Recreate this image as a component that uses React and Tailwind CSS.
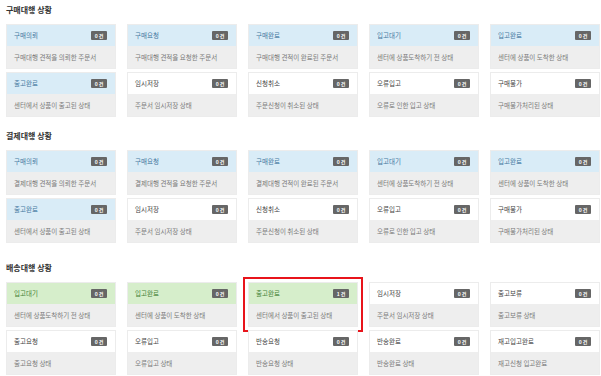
const sections = [
  {
    title: '구매대행 상황',
    cls: 'pt-[5px]',
    items: [
      ['구매의뢰', '구매대행 견적을 의뢰한 주문서', 'blue'],
      ['구매요청', '구매대행 견적을 요청한 주문서', 'blue'],
      ['구매완료', '구매대행 견적이 완료된 주문서', 'blue'],
      ['입고대기', '센터에 상품도착하기 전 상태', 'blue'],
      ['입고완료', '센터에 상품이 도착한 상태', 'blue'],
      ['출고완료', '센터에서 상품이 출고된 상태', 'blue'],
      ['임시저장', '주문서 임시저장 상태', 'white'],
      ['신청취소', '주문신청이 취소된 상태', 'white'],
      ['오류입고', '오류로 인한 입고 상태', 'white'],
      ['구매불가', '구매불가처리된 상태', 'white'],
    ],
  },
  {
    title: '결제대행 상황',
    cls: 'pt-[14px]',
    items: [
      ['구매의뢰', '결제대행 견적을 의뢰한 주문서', 'blue'],
      ['구매요청', '결제대행 견적을 요청한 주문서', 'blue'],
      ['구매완료', '결제대행 견적이 완료된 주문서', 'blue'],
      ['입고대기', '센터에 상품도착하기 전 상태', 'blue'],
      ['입고완료', '센터에 상품이 도착한 상태', 'blue'],
      ['출고완료', '센터에서 상품이 출고된 상태', 'blue'],
      ['임시저장', '주문서 임시저장 상태', 'white'],
      ['신청취소', '주문신청이 취소된 상태', 'white'],
      ['오류입고', '오류로 인한 입고 상태', 'white'],
      ['구매불가', '구매불가처리된 상태', 'white'],
    ],
  },
  {
    title: '배송대행 상황',
    cls: 'pt-[20px]',
    items: [
      ['입고대기', '센터에 상품도착하기 전 상태', 'green'],
      ['입고완료', '센터에 상품이 도착한 상태', 'green'],
      ['출고완료', '센터에서 상품이 출고된 상태', 'green', 1, true],
      ['임시저장', '주문서 임시저장 상태', 'white'],
      ['출고보류', '출고보류 상태', 'white'],
      ['출고요청', '출고요청 상태', 'white'],
      ['오류입고', '오류입고 상태', 'white'],
      ['반송요청', '반송요청 상태', 'white'],
      ['반송완료', '반송완료 상태', 'white'],
      ['재고입고완료', '재고신청 입고완료', 'white'],
    ],
  },
];

const tops = {
  blue: 'bg-[#d9ecf7] text-[#44789f]',
  green: 'bg-[#d6eecb] text-[#458337]',
  white: 'bg-white text-[#444444]',
};

function StatusCard({ label, desc, tone, count = 0, active }) {
  return (
    <div
      className={
        'flex h-[45px] flex-col border border-[#ececec] ' +
        (active ? 'outline-2 outline-[#e8141b] outline-offset-[3px]' : '')
      }
    >
      <div className={'flex h-[21px] items-center justify-between pl-[7px] pr-[8px] ' + tops[tone]}>
        <span className="text-[6.5px] leading-none">{label}</span>
        <span className="flex h-[9px] w-[16px] items-center justify-center rounded-[1px] bg-[#666666] text-[5px] font-bold leading-none text-white">
          {count} 건
        </span>
      </div>
      <div className="flex flex-1 items-center bg-[#eeeeee] pl-[7px] text-[6.5px] leading-none text-[#7a7a7a]">
        {desc}
      </div>
    </div>
  );
}

export default function App() {
  return (
    <div
      className="h-[376px] w-[601px] overflow-hidden bg-white pl-[6px]"
      style={{ fontFamily: '"Noto Sans CJK KR", "Noto Sans", sans-serif' }}
    >
      {sections.map((s) => (
        <section key={s.title} className={s.cls}>
          <h2 className="mb-[9px] h-[10px] text-[8px] font-bold leading-[10px] text-[#333333]">{s.title}</h2>
          <div className="grid grid-cols-[repeat(5,110px)] gap-x-[11px] gap-y-[3px]">
            {s.items.map(([label, desc, tone, count, active], i) => (
              <StatusCard key={i} label={label} desc={desc} tone={tone} count={count} active={active} />
            ))}
          </div>
        </section>
      ))}
    </div>
  );
}
